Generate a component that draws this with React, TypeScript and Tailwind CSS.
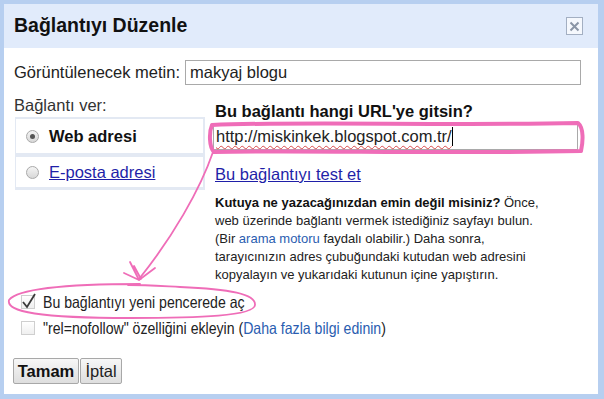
import React from 'react';

// Edit link dialog with hand-drawn pink annotations on top
const Radio = ({ checked }: { checked?: boolean }) => (
  <span className="w-[13px] h-[13px] rounded-full border border-[#a9a9a9] bg-gradient-to-b from-[#f4f4f4] to-[#d8d8d8] flex items-center justify-center shrink-0">
    {checked && <span className="w-[5px] h-[5px] rounded-full bg-[#555]" />}
  </span>
);

const Checkbox = ({ checked }: { checked?: boolean }) => (
  <span className="relative w-[14px] h-[14px] border border-[#cfcfcf] bg-gradient-to-b from-[#ffffff] to-[#efefef] shrink-0">
    {checked && (
      <svg className="absolute -left-[1px] -top-[4px]" width="16" height="18" viewBox="0 0 16 18">
        <path d="M2 10 L6 15 L14 2" fill="none" stroke="#3a3a3a" strokeWidth="1.8" />
      </svg>
    )}
  </span>
);

const Annotations = () => (
  <svg className="absolute inset-0 pointer-events-none" width="604" height="399" viewBox="0 0 604 399">
    <g fill="none" stroke="#ef6db8" strokeLinecap="round" strokeLinejoin="round">
      <path
        d="M212 125 C 300 121, 450 126, 578 123 C 584 128, 583 142, 581 151 C 450 154, 300 150, 214 152 C 209 147, 209 132, 212 125 Z"
        strokeWidth="4"
      />
      <path d="M213 152 C 200 190, 172 238, 139 279" strokeWidth="1.8" />
      <path d="M130 262 L139 280 L155 268 M124 273 L139 280 M134 266 L141 279" strokeWidth="1.8" />
      <path
        d="M140 284 C 90 284, 20 286, 9 300 C 6 312, 40 318, 130 318 C 200 318, 254 316, 255 305 C 256 294, 230 289, 180 287 C 160 286, 145 285, 128 285"
        strokeWidth="1.8"
      />
    </g>
  </svg>
);

export default function App() {
  return (
    <div className="relative w-[604px] h-[399px] bg-[#b7cff0] pl-[4px] pt-[4px] pr-[6px] pb-[5px] font-['Liberation_Sans',Arial,sans-serif] text-[#222]">
      <div className="h-full flex flex-col bg-white">
        <div className="h-[44px] shrink-0 bg-[#e1ebfb] flex items-center justify-between pl-[10px] pr-[15px]">
          <h1 className="text-[19.5px] font-bold text-[#111] leading-none">Bağlantıyı Düzenle</h1>
          <button className="w-[17px] h-[18px] border border-[#a3afc2] bg-[#f5f8fd] flex items-center justify-center">
            <svg width="11" height="11" viewBox="0 0 11 11">
              <path d="M1.5 1.5 L9.5 9.5 M9.5 1.5 L1.5 9.5" stroke="#8a95a6" strokeWidth="2" />
            </svg>
          </button>
        </div>

        <div className="pl-[10px] pr-[17px] pt-[12px] text-[16.5px]">
          <div className="flex items-center h-[25px]">
            <label className="w-[171px] shrink-0">Görüntülenecek metin:</label>
            <div className="flex-1 h-[25px] border border-[#a9a9a9] flex items-center px-[4px]">makyaj blogu</div>
          </div>

          <div className="flex mt-[10px]">
            <div className="w-[191px] shrink-0">
              <div className="h-[20px] leading-[20px] text-[#333]">Bağlantı ver:</div>
              <div className="mt-[2px] ml-[1px] bg-[#e3e9f3] pt-[2px] pb-[3px] pl-[1px] pr-[2px] flex flex-col gap-[4px]">
                <div className="h-[34px] bg-white flex items-center gap-[10px] pl-[10px]">
                  <Radio checked />
                  <span className="font-bold text-[#111]">Web adresi</span>
                </div>
                <div className="h-[30px] bg-white flex items-center gap-[10px] pl-[10px]">
                  <Radio />
                  <span className="underline text-[#1f1fa8]">E-posta adresi</span>
                </div>
              </div>
            </div>

            <div className="ml-[8px] flex-1 pt-[6px]">
              <div className="h-[20px] leading-[20px] pl-[2px] font-bold text-[#111]">Bu bağlantı hangi URL'ye gitsin?</div>
              <div className="mt-[2px] w-[365px] h-[27px] border border-[#a9a9a9] flex items-center px-[2px]">
                <span className="underline decoration-wavy decoration-[#d84a4a] decoration-1 underline-offset-[3px]">http://miskinkek.blogspot.com.tr/</span>
                <span className="w-[1px] h-[19px] bg-black" />
              </div>
              <div className="mt-[14px] h-[20px] leading-[20px] pl-[2px] underline text-[#1f1fa8]">Bu bağlantıyı test et</div>
              <p className="mt-[10px] pl-[2px] text-[13px] leading-[18px] text-[#222]">
                <b className="text-[#111]">Kutuya ne yazacağınızdan emin değil misiniz?</b> Önce,
                <br />
                web üzerinde bağlantı vermek istediğiniz sayfayı bulun.
                <br />
                (Bir <span className="text-[#2a5db0]">arama motoru</span> faydalı olabilir.) Daha sonra,
                <br />
                tarayıcınızın adres çubuğundaki kutudan web adresini
                <br />
                kopyalayın ve yukarıdaki kutunun içine yapıştırın.
              </p>
            </div>
          </div>

          <div className="mt-[5px] ml-[7px] flex flex-col text-[16.5px]">
            <div className="h-[26px] flex items-center gap-[8px]">
              <Checkbox checked />
              <span className="inline-block origin-left scale-x-[0.855] whitespace-nowrap">Bu bağlantıyı yeni pencerede aç</span>
            </div>
            <div className="h-[26px] flex items-center gap-[8px]">
              <Checkbox />
              <span className="inline-block origin-left scale-x-[0.855] whitespace-nowrap">
                "rel=nofollow" özelliğini ekleyin (<span className="text-[#2a5db0]">Daha fazla bilgi edinin</span>)
              </span>
            </div>
          </div>

          <div className="mt-[17px] -ml-[1px] flex gap-[1px]">
            <button className="w-[66px] h-[26px] border border-[#a8a8a8] rounded-[2px] bg-gradient-to-b from-[#f7f7f7] to-[#dedede] font-bold text-[#111]">
              Tamam
            </button>
            <button className="w-[42px] h-[26px] border border-[#a8a8a8] rounded-[2px] bg-gradient-to-b from-[#f7f7f7] to-[#dedede] text-[#222]">
              İptal
            </button>
          </div>
        </div>
      </div>
      <Annotations />
    </div>
  );
}
